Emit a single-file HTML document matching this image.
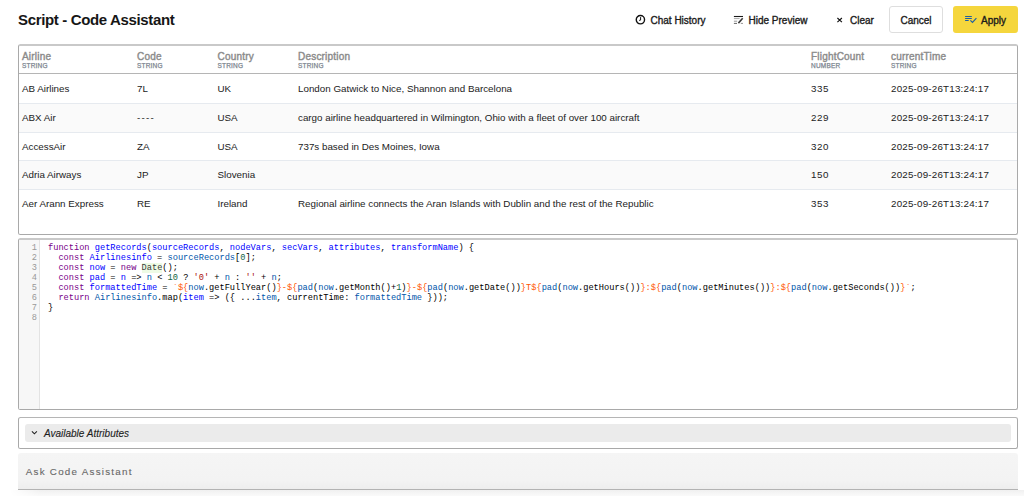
<!DOCTYPE html>
<html><head><meta charset="utf-8">
<style>
*{box-sizing:border-box;margin:0;padding:0}
html,body{width:1024px;height:496px;overflow:hidden;background:#fff;font-family:"Liberation Sans",sans-serif;color:#1f1f1f}
.abs{position:absolute}
.title{position:absolute;left:18px;top:9px;font-size:15px;letter-spacing:-0.35px;font-weight:bold;color:#161616;line-height:22px;white-space:nowrap}
.tb{position:absolute;top:7px;height:27px;font-size:10px;font-weight:normal;-webkit-text-stroke:0.35px #1b1b1b;line-height:27px;white-space:nowrap;color:#1b1b1b}
.btn{position:absolute;top:6px;height:27px;border-radius:3px;font-size:10px;font-weight:normal;-webkit-text-stroke:0.35px #1b1b1b;line-height:27px;text-align:center;color:#1b1b1b}
.box{position:absolute;left:18px;width:1000px;border:1px solid #a9a9a9;border-top:2px solid #c9c9c9;border-radius:2.5px;overflow:hidden}
.th{position:absolute;top:5.5px;font-size:10px;letter-spacing:0.2px;font-weight:normal;color:#8b8b8b;-webkit-text-stroke:0.4px #8b8b8b;line-height:10px;white-space:nowrap}
.th span{display:block;font-size:6.5px;color:#7d8690;-webkit-text-stroke:0.25px #7d8690;letter-spacing:0.2px;line-height:7px;margin-top:0.8px}
.row{position:absolute;left:0;width:998px;height:29px;border-top:1px solid #e6eaef}
.row.alt{background:#fafafa}
.cell{position:absolute;top:0px;line-height:28px;font-size:9.8px;color:#222;white-space:nowrap}
.num{letter-spacing:0.5px}.dtm{letter-spacing:0.2px}.dash{letter-spacing:1.2px}
.gut{position:absolute;left:0;top:0;width:21px;height:100%;background:#f7f7f7;border-right:1px solid #e3e3e3}
.ln{position:absolute;right:2px;width:18px;text-align:right;font-family:"Liberation Mono",monospace;font-size:8.667px;color:#999;line-height:10.1px}
.code{position:absolute;left:29px;top:2.7px;font-family:"Liberation Mono",monospace;font-size:8.667px;line-height:10.1px;white-space:pre;color:#000}
.k{color:#708}.d{color:#00f}.v2{color:#05a}.n{color:#164}.s{color:#a11}.s2{color:#f50}
.dt{background:#eefbe4;color:#3a3a3a}
</style></head><body>
<div class="title">Script - Code Assistant</div>

<!-- Chat history -->
<svg class="abs" style="left:630px;top:10px" width="20" height="20" viewBox="0 0 20 20"><circle cx="10.4" cy="9.7" r="4.15" fill="none" stroke="#111" stroke-width="1.4"/><path d="M10.6 7.1V10.1L9.1 10.4" fill="none" stroke="#111" stroke-width="1"/></svg>
<div class="tb" style="left:650.5px">Chat History</div>

<!-- Hide preview -->
<svg class="abs" style="left:730px;top:10px" width="20" height="20" viewBox="0 0 20 20"><path d="M3.9 6.5H13" stroke="#1a1a1a" stroke-width="1.1"/><path d="M3.9 8.6H9.6" stroke="#aaa" stroke-width="1"/><path d="M3.9 11.2H7.2" stroke="#999" stroke-width="1"/><path d="M3.9 13.4H7" stroke="#666" stroke-width="1"/><path d="M10.8 13.4H13" stroke="#888" stroke-width="0.9"/><path d="M8.4 13.1L12.7 8.3" stroke="#3a3a3a" stroke-width="1.6"/></svg>
<div class="tb" style="left:748.5px">Hide Preview</div>

<!-- Clear -->
<svg class="abs" style="left:830px;top:10px" width="20" height="20" viewBox="0 0 20 20"><path d="M7.4 8L11.9 12.2M11.9 8L7.4 12.2" stroke="#151515" stroke-width="1.15"/></svg>
<div class="tb" style="left:850px">Clear</div>

<div class="btn" style="left:889px;width:54px;border:1px solid #dedede;background:#fff">Cancel</div>
<div class="btn" style="left:953px;width:65px;background:#f5d63d;line-height:29px;text-align:left;padding-left:28px">Apply</div>
<svg class="abs" style="left:960px;top:10px" width="20" height="20" viewBox="0 0 20 20"><path d="M5.1 6.55H11.8M5.1 8.45H11.8M5.1 10.5H8.7" stroke="#1c5ea6" stroke-width="1.1"/><path d="M10.4 10.4L12.5 12.5L16.4 8.2" fill="none" stroke="#1c5ea6" stroke-width="1.15"/></svg>

<!-- Table -->
<div class="box" style="top:44px;height:191px">
  <div class="th" style="left:3px">Airline<span>STRING</span></div>
  <div class="th" style="left:118px">Code<span>STRING</span></div>
  <div class="th" style="left:198.5px">Country<span>STRING</span></div>
  <div class="th" style="left:279px">Description<span>STRING</span></div>
  <div class="th" style="left:792px">FlightCount<span>NUMBER</span></div>
  <div class="th" style="left:872px">currentTime<span>STRING</span></div>
  <div class="abs" style="left:0;top:27px;width:998px;height:1px;background:#b5b5b5"></div>

  <div class="row" style="top:29px;border-top:none">
    <div class="cell" style="left:3px">AB Airlines</div><div class="cell" style="left:118px">7L</div><div class="cell" style="left:198.5px">UK</div><div class="cell" style="left:279px">London Gatwick to Nice, Shannon and Barcelona</div><div class="cell num" style="left:792px">335</div><div class="cell dtm" style="left:872px">2025-09-26T13:24:17</div>
  </div>
  <div class="row alt" style="top:57.2px">
    <div class="cell" style="left:3px">ABX Air</div><div class="cell dash" style="left:118px">----</div><div class="cell" style="left:198.5px">USA</div><div class="cell" style="left:279px">cargo airline headquartered in Wilmington, Ohio with a fleet of over 100 aircraft</div><div class="cell num" style="left:792px">229</div><div class="cell dtm" style="left:872px">2025-09-26T13:24:17</div>
  </div>
  <div class="row" style="top:85.8px">
    <div class="cell" style="left:3px">AccessAir</div><div class="cell" style="left:118px">ZA</div><div class="cell" style="left:198.5px">USA</div><div class="cell" style="left:279px">737s based in Des Moines, Iowa</div><div class="cell num" style="left:792px">320</div><div class="cell dtm" style="left:872px">2025-09-26T13:24:17</div>
  </div>
  <div class="row alt" style="top:114.4px">
    <div class="cell" style="left:3px">Adria Airways</div><div class="cell" style="left:118px">JP</div><div class="cell" style="left:198.5px">Slovenia</div><div class="cell num" style="left:792px">150</div><div class="cell dtm" style="left:872px">2025-09-26T13:24:17</div>
  </div>
  <div class="row" style="top:143.1px">
    <div class="cell" style="left:3px">Aer Arann Express</div><div class="cell" style="left:118px">RE</div><div class="cell" style="left:198.5px">Ireland</div><div class="cell" style="left:279px">Regional airline connects the Aran Islands with Dublin and the rest of the Republic</div><div class="cell num" style="left:792px">353</div><div class="cell dtm" style="left:872px">2025-09-26T13:24:17</div>
  </div>
</div>

<!-- Editor -->
<div class="box" style="top:238px;height:172px">
  <div class="gut">
    <div class="ln" style="top:2.7px">1<br>2<br>3<br>4<br>5<br>6<br>7<br>8</div>
  </div>
  <div class="code"><span class="k">function</span> <span class="d">getRecords</span>(<span class="d">sourceRecords</span>, <span class="d">nodeVars</span>, <span class="d">secVars</span>, <span class="d">attributes</span>, <span class="d">transformName</span>) {
  <span class="k">const</span> <span class="d">Airlinesinfo</span> = <span class="v2">sourceRecords</span>[<span class="n">0</span>];
  <span class="k">const</span> <span class="d">now</span> = <span class="k">new</span> <span class="dt">Date</span>();
  <span class="k">const</span> <span class="d">pad</span> = <span class="d">n</span> =&gt; <span class="v2">n</span> &lt; <span class="n">10</span> ? <span class="s">'0'</span> + <span class="v2">n</span> : <span class="s">''</span> + <span class="v2">n</span>;
  <span class="k">const</span> <span class="d">formattedTime</span> = <span class="s2">`${</span><span class="v2">now</span>.getFullYear()<span class="s2">}-${</span><span class="v2">pad</span>(<span class="v2">now</span>.getMonth()+<span class="n">1</span>)<span class="s2">}-${</span><span class="v2">pad</span>(<span class="v2">now</span>.getDate())<span class="s2">}T${</span><span class="v2">pad</span>(<span class="v2">now</span>.getHours())<span class="s2">}:${</span><span class="v2">pad</span>(<span class="v2">now</span>.getMinutes())<span class="s2">}:${</span><span class="v2">pad</span>(<span class="v2">now</span>.getSeconds())<span class="s2">}`</span>;
  <span class="k">return</span> <span class="v2">Airlinesinfo</span>.map(<span class="d">item</span> =&gt; ({ ...<span class="v2">item</span>, currentTime: <span class="v2">formattedTime</span> }));
}
</div>
</div>

<!-- Available attributes -->
<div class="box" style="top:417px;height:32px;border-top:1px solid #b5b5b5">
  <div class="abs" style="left:6px;top:5.5px;width:986px;height:18.5px;background:#ebebeb;border-radius:3px"></div>
  <svg class="abs" style="left:12px;top:12px" width="7" height="6" viewBox="0 0 7 6"><path d="M0.9 1.3L3.4 3.8L5.9 1.3" fill="none" stroke="#222" stroke-width="1.1"/></svg>
  <div class="abs" style="left:25px;top:6.5px;line-height:18px;font-size:10px;font-style:italic;color:#1e1e1e;-webkit-text-stroke:0.12px #1e1e1e;white-space:nowrap">Available Attributes</div>
</div>

<!-- Ask code assistant -->
<div class="abs" style="left:18px;top:452.5px;width:1000px;height:37.5px;background:linear-gradient(#f5f5f5,#f3f3f3 75%,#eeeeee);border-bottom:1px solid #b3b3b3;border-radius:3px 3px 0 0"></div>
<div class="abs" style="left:25.8px;top:462.3px;line-height:20px;font-size:9.8px;letter-spacing:1.25px;color:#676767;-webkit-text-stroke:0.1px #676767;white-space:nowrap">Ask Code Assistant</div>
<div class="abs" style="left:10px;top:490px;width:1014px;height:6px;background:linear-gradient(#f0f0f0,#fafafa);-webkit-mask-image:linear-gradient(90deg,transparent,#000 30px)"></div>
</body></html>
